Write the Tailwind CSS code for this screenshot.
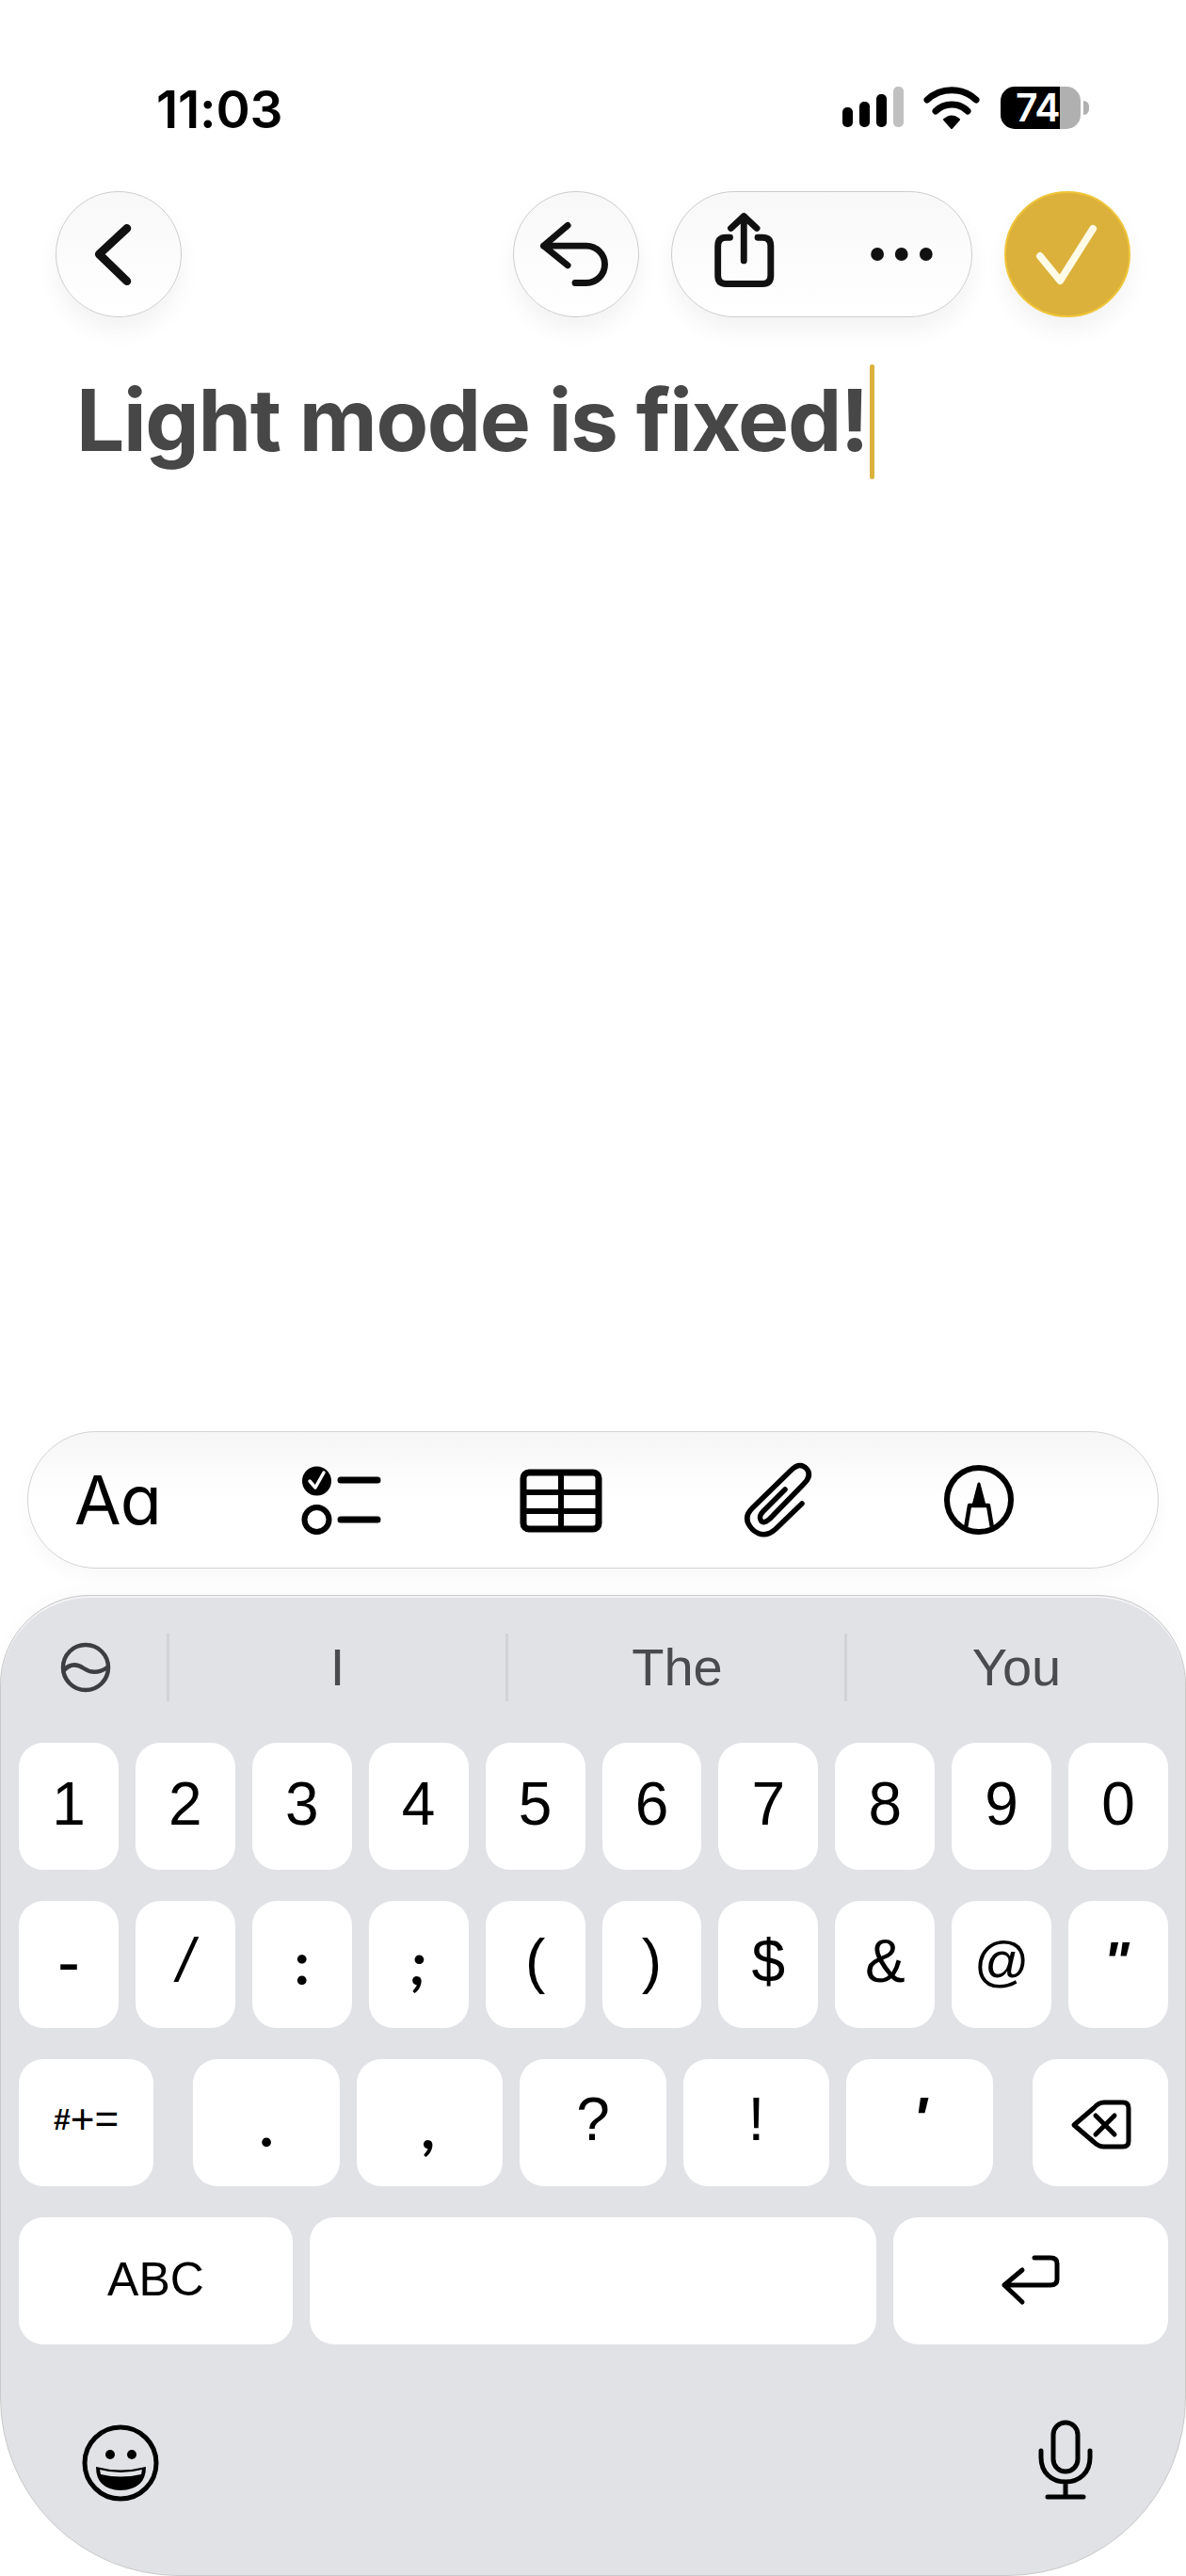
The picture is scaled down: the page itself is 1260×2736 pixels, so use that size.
<!DOCTYPE html>
<html lang="en">
<head>
    <meta charset="UTF-8">
    <meta name="viewport" content="width=device-width, initial-scale=1.0">
    <title>Note</title>
    <script src="https://cdn.jsdelivr.net/npm/@tailwindcss/browser@4"></script>
</head>
<body class="bg-white text-black font-['Liberation_Sans',sans-serif]">
<div class="w-[1260px] h-[2736px] flex flex-col overflow-hidden bg-white">

    <!-- status bar -->
    <div class="h-[203px] shrink-0 pt-[92px] pl-[166px] pr-[103px] flex justify-between items-start">
        <span class="font-['Inter',sans-serif] font-semibold text-[55px] leading-[48px] tracking-[-0.2px]">11:03</span>
        <div class="flex items-start">
            <svg class="w-[146px] h-[45px]" viewBox="895 92 146 45">
                <rect x="895" y="114" width="11" height="21" rx="5"/>
                <rect x="913" y="108" width="11" height="27" rx="5"/>
                <rect x="931" y="100" width="11" height="35" rx="5"/>
                <rect x="949" y="92" width="11" height="43" rx="5" fill="#c0c0c0"/>
                <g fill="none" stroke="#000" stroke-width="7" stroke-linecap="round">
                    <path d="M985 106A38 38 0 0 1 1037 106"/>
                    <path d="M994 118A24 24 0 0 1 1028 118"/>
                </g>
                <path d="M1003 127Q1011 120 1019 127L1011 136Z" stroke="#000" stroke-width="2" stroke-linejoin="round"/>
            </svg>
            <div class="ml-[22px] w-[85px] h-[45px] rounded-[15px] pl-[16px] flex items-center bg-[linear-gradient(90deg,#000_63px,#b0b0b0_63px)] text-white font-['Inter',sans-serif] font-semibold text-[41px] tracking-[-1px] leading-none">74</div>
            <div class="ml-[3px] mt-[15px] w-[6px] h-[15px] rounded-r-full bg-[#b0b0b0]"></div>
        </div>
    </div>

    <!-- nav buttons -->
    <div class="h-[134px] shrink-0 pl-[59px] pr-[59px] flex items-center">
        <button class="w-[134px] h-[134px] rounded-full border border-[#cdcdcd] bg-linear-to-b from-[#f8f8f8] to-white shadow-[0_14px_24px_rgba(0,0,0,0.05)]">
            <svg class="w-full h-full" viewBox="59 203 134 134" fill="none" stroke="#111" stroke-width="9" stroke-linecap="round" stroke-linejoin="round">
                <path d="M135 242L105 270L135 299"/>
            </svg>
        </button>
        <button class="ml-auto w-[134px] h-[134px] rounded-full border border-[#cdcdcd] bg-linear-to-b from-[#f8f8f8] to-white shadow-[0_14px_24px_rgba(0,0,0,0.05)]">
            <svg class="w-full h-full" viewBox="545 203 134 134" fill="none" stroke="#111" stroke-width="7" stroke-linecap="round" stroke-linejoin="round">
                <path d="M603 239L577 261L603 282M577 261H623A20 20 0 0 1 623 301H611"/>
            </svg>
        </button>
        <div class="ml-[34px] w-[320px] h-[134px] rounded-full border border-[#cdcdcd] bg-linear-to-b from-[#f8f8f8] to-white shadow-[0_14px_24px_rgba(0,0,0,0.05)]">
            <svg class="w-full h-full" viewBox="713 203 320 134" fill="none" stroke="#111" stroke-width="7" stroke-linecap="round" stroke-linejoin="round">
                <path d="M775 242L789 229L803 242M789 229V277M774 252H770Q761 252 761 261V293Q761 302 770 302H809Q818 302 818 293V261Q818 252 809 252H804"/>
                <circle cx="933" cy="270" r="7" fill="#111" stroke="none"/>
                <circle cx="959" cy="270" r="7" fill="#111" stroke="none"/>
                <circle cx="985.500" cy="270" r="7" fill="#111" stroke="none"/>
            </svg>
        </div>
        <button class="ml-[34px] w-[134px] h-[134px] rounded-full border-2 border-[#f0c53a] bg-[#dbb13b] shadow-[0_14px_24px_rgba(0,0,0,0.05)]">
            <svg class="w-full h-full" viewBox="1067 203 134 134" fill="none" stroke="#fffbe6" stroke-width="8" stroke-linecap="round" stroke-linejoin="round">
                <path d="M1104 272L1126 299L1162 242"/>
            </svg>
        </button>
    </div>

    <!-- title with caret -->
    <div class="pt-[50px] pl-[81px] flex items-start">
        <h1 class="-mt-[2px] font-['Inter',sans-serif] font-bold text-[91px] leading-[122px] tracking-[-1.4px] text-[#474747]">Light mode is fixed!</h1>
        <div class="ml-[2px] w-[5px] h-[122px] bg-[#dbb13b] rounded-full"></div>
    </div>

    <div class="flex-1"></div>

    <!-- formatting toolbar -->
    <div class="mx-[29px] h-[146px] shrink-0 rounded-full border border-[#d4d4d4] bg-linear-to-b from-[#f6f6f6] via-white to-white shadow-[0_8px_20px_rgba(0,0,0,0.03)] flex items-center relative">
        <span class="ml-[49px] font-['Inter',sans-serif] text-[72px] leading-none [font-feature-settings:'cv11'] tracking-[-1px]">Aa</span>
        <svg class="absolute left-0 top-0 w-[1202px] h-[146px] pointer-events-none" viewBox="29 1520 1202 146" fill="none" stroke="#000" stroke-width="6" stroke-linecap="round" stroke-linejoin="round">
            <circle cx="335.500" cy="1572" r="15.500" fill="#000" stroke="none"/>
            <path d="M328 1572L334 1579L343 1563" stroke="#fff" stroke-width="3.500"/>
            <circle cx="335.500" cy="1613" r="13"/>
            <path d="M361 1571H400M361 1613H400" stroke-width="7"/>
            <rect x="555" y="1563" width="80" height="60" rx="6" stroke-width="7"/>
            <path d="M555 1584H635M555 1604H635M595 1563V1623" stroke-width="6"/>
            <path d="M851 1596L823 1623Q811 1634 799 1624Q787 1612 798 1601L839 1561Q849 1551 856 1559Q862 1566 853 1575L817 1612Q809 1619 807 1613Q805 1609 810 1604L833 1581" stroke-width="5.500"/>
            <circle cx="1039" cy="1592" r="34" stroke-width="6"/>
            <path d="M1039 1575L1033 1598H1045Z" fill="#000" stroke-width="3"/>
            <path d="M1029 1598L1025 1622M1049 1598L1053 1622M1029 1598H1049" stroke-width="4.500"/>
        </svg>
    </div>

    <!-- keyboard -->
    <div class="mt-[28px] h-[1042px] shrink-0 rounded-t-[95px] rounded-b-[190px] border border-[#c9c9c9] bg-[#e1e2e6] shadow-[inset_0_2px_0_#f4f4f6,0_-8px_16px_rgba(0,0,0,0.015)] pl-[19px] pr-[18px]">

        <!-- predictions -->
        <div class="h-[156px] flex items-center text-[56px] text-[#4a4b4e] pb-[10px] pt-[6px]">
            <div class="w-[157px] shrink-0 flex justify-center">
                <svg class="w-[56px] h-[54px] ml-[-16px]" viewBox="62 1742 56 54" fill="none" stroke="#3c3e42" stroke-width="4.500" stroke-linecap="round">
                    <circle cx="90" cy="1769" r="24"/>
                    <path d="M67 1772Q76 1762 88 1770Q100 1778 113 1769"/>
                </svg>
            </div>
            <div class="w-[3px] h-[72px] shrink-0 bg-[#d2d3d7]"></div>
            <div class="w-[357px] shrink-0 text-center leading-none">I</div>
            <div class="w-[3px] h-[72px] shrink-0 bg-[#d2d3d7]"></div>
            <div class="w-[357px] shrink-0 text-center leading-none pl-[2px]">The</div>
            <div class="w-[3px] h-[72px] shrink-0 bg-[#d2d3d7]"></div>
            <div class="w-[360px] shrink-0 text-center leading-none">You</div>
        </div>

        <!-- digits -->
        <div class="grid grid-cols-10 gap-[18px] h-[135px] text-[64px] leading-none">
            <div class="bg-white rounded-[26px] flex items-center justify-center pb-[6px]">1</div>
            <div class="bg-white rounded-[26px] flex items-center justify-center pb-[6px]">2</div>
            <div class="bg-white rounded-[26px] flex items-center justify-center pb-[6px]">3</div>
            <div class="bg-white rounded-[26px] flex items-center justify-center pb-[6px]">4</div>
            <div class="bg-white rounded-[26px] flex items-center justify-center pb-[6px]">5</div>
            <div class="bg-white rounded-[26px] flex items-center justify-center pb-[6px]">6</div>
            <div class="bg-white rounded-[26px] flex items-center justify-center pb-[6px]">7</div>
            <div class="bg-white rounded-[26px] flex items-center justify-center pb-[6px]">8</div>
            <div class="bg-white rounded-[26px] flex items-center justify-center pb-[6px]">9</div>
            <div class="bg-white rounded-[26px] flex items-center justify-center pb-[6px]">0</div>
        </div>

        <!-- punctuation -->
        <div class="mt-[33px] grid grid-cols-10 gap-[18px] h-[135px] text-[64px] leading-none">
            <div class="bg-white rounded-[26px] flex items-center justify-center pb-[8px] text-[72px]">-</div>
            <div class="bg-white rounded-[26px] flex items-center justify-center pb-[10px] italic">/</div>
            <div class="bg-white rounded-[26px] flex items-center justify-center pb-[6px] font-['Lato',sans-serif] font-bold">:</div>
            <div class="bg-white rounded-[26px] flex items-center justify-center pb-[6px] font-['Lato',sans-serif] font-bold italic">;</div>
            <div class="bg-white rounded-[26px] flex items-center justify-center pb-[8px]">(</div>
            <div class="bg-white rounded-[26px] flex items-center justify-center pb-[8px]">)</div>
            <div class="bg-white rounded-[26px] flex items-center justify-center pb-[8px]">$</div>
            <div class="bg-white rounded-[26px] flex items-center justify-center pb-[8px]">&amp;</div>
            <div class="bg-white rounded-[26px] flex items-center justify-center pb-[8px] text-[58px]">@</div>
            <div class="bg-white rounded-[26px] flex items-center justify-center pb-[8px] pr-[4px] font-bold italic text-[58px]">"</div>
        </div>

        <!-- symbols and delete -->
        <div class="mt-[33px] flex gap-[18px] h-[135px] text-[64px] leading-none">
            <div class="w-[143px] mr-[24px] bg-white rounded-[26px] flex items-center justify-center pb-[8px]">
                <span class="text-[32px] font-bold">#</span><span class="text-[44px] leading-none">+=</span>
            </div>
            <div class="w-[156px] bg-white rounded-[26px] flex items-center justify-center pt-[2px] font-['Lato',sans-serif] font-bold">.</div>
            <div class="w-[155px] bg-white rounded-[26px] flex items-center justify-center pt-[6px] font-['Lato',sans-serif] font-bold italic">,</div>
            <div class="w-[156px] bg-white rounded-[26px] flex items-center justify-center pb-[8px]">?</div>
            <div class="w-[155px] bg-white rounded-[26px] flex items-center justify-center pb-[8px]">!</div>
            <div class="w-[156px] mr-[24px] bg-white rounded-[26px] flex items-center justify-center pb-[8px] font-bold italic">'</div>
            <div class="w-[144px] bg-white rounded-[26px]">
                <svg class="w-full h-full" viewBox="1097 2187 144 135" fill="none" stroke="#000" stroke-width="5" stroke-linecap="round" stroke-linejoin="round">
                    <path d="M1141 2257L1162 2239Q1167 2233 1173 2233H1193Q1199 2233 1199 2239V2274Q1199 2280 1193 2280H1173Q1167 2280 1162 2275Z"/>
                    <path d="M1164 2247L1184 2267M1184 2247L1164 2267"/>
                </svg>
            </div>
        </div>

        <!-- bottom row -->
        <div class="mt-[33px] flex gap-[18px] h-[135px] leading-none">
            <div class="w-[291px] bg-white rounded-[26px] flex items-center justify-center text-[50px] pb-[4px]">ABC</div>
            <div class="w-[602px] bg-white rounded-[26px]"></div>
            <div class="w-[292px] bg-white rounded-[26px]">
                <svg class="w-full h-full" viewBox="949 2355 292 135" fill="none" stroke="#000" stroke-width="5" stroke-linecap="round" stroke-linejoin="round">
                    <path d="M1086 2411L1067 2427L1086 2445M1067 2427H1116Q1123 2427 1123 2421V2404Q1123 2398 1116 2398H1099"/>
                </svg>
            </div>
        </div>

        <!-- emoji and dictation -->
        <div class="mt-[84px] flex justify-between items-start pl-[66px] pr-[79px]">
            <svg class="w-[84px] h-[84px]" viewBox="85 2574 84 84">
                <circle cx="127" cy="2616" r="38" fill="none" stroke="#000" stroke-width="5"/>
                <circle cx="116" cy="2607" r="5"/>
                <circle cx="139" cy="2607" r="5"/>
                <path d="M101 2620Q127 2627 154 2620Q154 2644 127 2645Q101 2644 101 2620Z"/>
                <path d="M105 2623Q127 2629 150 2623L149 2628Q127 2633 106 2628Z" fill="#e1e2e6"/>
            </svg>
            <svg class="-mt-[4px] w-[60px] h-[86px]" viewBox="1102 2570 60 86" fill="none" stroke="#000" stroke-width="5" stroke-linecap="round" stroke-linejoin="round">
                <rect x="1119" y="2573" width="26" height="52" rx="13"/>
                <path d="M1106 2603V2610C1106 2626 1117 2636 1132 2636C1147 2636 1158 2626 1158 2610V2603M1132 2636V2652M1113 2652H1151"/>
            </svg>
        </div>
    </div>
</div>
</body>
</html>
